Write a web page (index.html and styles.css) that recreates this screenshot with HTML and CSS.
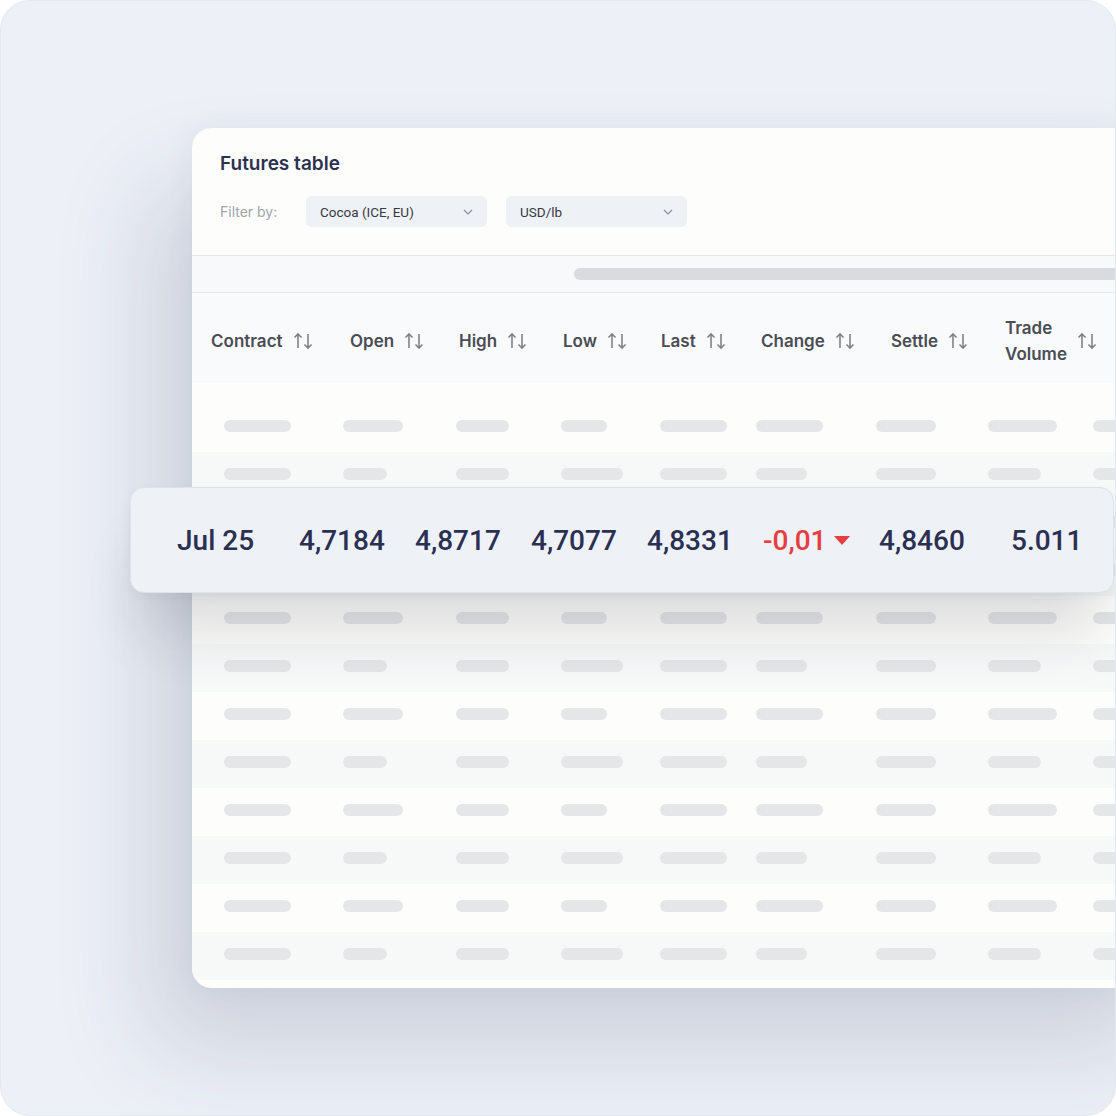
FILE: index.html
```html
<!DOCTYPE html>
<html>
	<head>
		<meta charset="UTF-8">
		<title>Futures table</title>
		<link rel="stylesheet" href="styles.css">
	</head>
	<body>
		<div class="frame">
			<div class="card">
				<div class="card-inner">
					<div class="card-head">
						<h1>Futures table</h1>
						<div class="filters">
							<span class="filter-label">Filter by:</span>
							<div class="select">Cocoa (ICE, EU) <svg class="chevron" viewBox="0 0 10 6"><path d="M1 1l4 4 4-4"/></svg></div>
							<div class="select">USD/lb <svg class="chevron" viewBox="0 0 10 6"><path d="M1 1l4 4 4-4"/></svg></div>
						</div>
					</div>
					<div class="scroll-strip"><div class="scroll-thumb"></div></div>
					<div class="thead">
						<div class="th">Contract <svg class="sort" viewBox="0 0 20 20"><path d="M5 17V3M1.5 6.5L5 3l3.5 3.5M15 3v14M11.5 13.5L15 17l3.5-3.5"/></svg></div>
						<div class="th">Open <svg class="sort" viewBox="0 0 20 20"><path d="M5 17V3M1.5 6.5L5 3l3.5 3.5M15 3v14M11.5 13.5L15 17l3.5-3.5"/></svg></div>
						<div class="th">High <svg class="sort" viewBox="0 0 20 20"><path d="M5 17V3M1.5 6.5L5 3l3.5 3.5M15 3v14M11.5 13.5L15 17l3.5-3.5"/></svg></div>
						<div class="th">Low <svg class="sort" viewBox="0 0 20 20"><path d="M5 17V3M1.5 6.5L5 3l3.5 3.5M15 3v14M11.5 13.5L15 17l3.5-3.5"/></svg></div>
						<div class="th">Last <svg class="sort" viewBox="0 0 20 20"><path d="M5 17V3M1.5 6.5L5 3l3.5 3.5M15 3v14M11.5 13.5L15 17l3.5-3.5"/></svg></div>
						<div class="th">Change <svg class="sort" viewBox="0 0 20 20"><path d="M5 17V3M1.5 6.5L5 3l3.5 3.5M15 3v14M11.5 13.5L15 17l3.5-3.5"/></svg></div>
						<div class="th">Settle <svg class="sort" viewBox="0 0 20 20"><path d="M5 17V3M1.5 6.5L5 3l3.5 3.5M15 3v14M11.5 13.5L15 17l3.5-3.5"/></svg></div>
						<div class="th">Trade<br>Volume <svg class="sort" viewBox="0 0 20 20"><path d="M5 17V3M1.5 6.5L5 3l3.5 3.5M15 3v14M11.5 13.5L15 17l3.5-3.5"/></svg></div>
					</div>
					<div class="tbody">
						<div class="row"><i></i><i></i><i></i><i></i><i></i><i></i><i></i><i></i><i></i></div>
						<div class="row"><i></i><i></i><i></i><i></i><i></i><i></i><i></i><i></i><i></i></div>
						<div class="row"><i></i><i></i><i></i><i></i><i></i><i></i><i></i><i></i><i></i></div>
						<div class="row"><i></i><i></i><i></i><i></i><i></i><i></i><i></i><i></i><i></i></div>
						<div class="row"><i></i><i></i><i></i><i></i><i></i><i></i><i></i><i></i><i></i></div>
						<div class="row"><i></i><i></i><i></i><i></i><i></i><i></i><i></i><i></i><i></i></div>
						<div class="row"><i></i><i></i><i></i><i></i><i></i><i></i><i></i><i></i><i></i></div>
						<div class="row"><i></i><i></i><i></i><i></i><i></i><i></i><i></i><i></i><i></i></div>
						<div class="row"><i></i><i></i><i></i><i></i><i></i><i></i><i></i><i></i><i></i></div>
						<div class="row"><i></i><i></i><i></i><i></i><i></i><i></i><i></i><i></i><i></i></div>
						<div class="row"><i></i><i></i><i></i><i></i><i></i><i></i><i></i><i></i><i></i></div>
						<div class="row"><i></i><i></i><i></i><i></i><i></i><i></i><i></i><i></i><i></i></div>
					</div>
				</div>
				<!-- selected contract, lifted over the table -->
				<div class="row-focus">
					<span>Jul 25</span>
					<span>4,7184</span>
					<span>4,8717</span>
					<span>4,7077</span>
					<span>4,8331</span>
					<span class="neg">-0,01 <svg class="tri" viewBox="0 0 16 9"><path d="M0 0h16L8 9z"/></svg></span>
					<span>4,8460</span>
					<span>5.011</span>
				</div>
			</div>
		</div>
	</body>
</html>
```

FILE: styles.css
```css
*{
	margin: 0;
	padding: 0;
	box-sizing: border-box;
}
body{
	background: #fff;
	font-family: Roboto, "Liberation Sans", sans-serif;
}
.frame{
	width: 1116px;
	height: 1116px;
	background: #edf0f7;
	border: 1px solid #e3e7ee;
	border-radius: 30px;
	overflow: hidden;
	padding: 127px 0 0 191px;
}
.card{
	position: relative;
	width: 1000px;
	height: 860px;
	background: #fdfdfb;
	border-radius: 20px;
	box-shadow: -40px 60px 100px rgba(40, 50, 80, 0.16), 0 0 30px rgba(40, 50, 80, 0.05);
}
.card-inner{
	height: 100%;
	border-radius: 20px;
	overflow: hidden;
}
.card-head{
	height: 128px;
	padding: 24px 28px 0;
	border-bottom: 1px solid #e7e8ea;
}
.card-head h1{
	font: 600 19px/24px Inter, sans-serif;
	color: #2c3150;
}
.filters{
	display: flex;
	align-items: center;
	margin-top: 20px;
}
.filter-label{
	width: 86px;
	font: 14px Inter, sans-serif;
	color: #a1a4ab;
}
.select{
	width: 181px;
	height: 31px;
	margin-right: 19px;
	padding: 0 14px;
	background: #eef1f6;
	border-radius: 6px;
	display: flex;
	align-items: center;
	justify-content: space-between;
	font-size: 13.5px;
	color: #373a42;
}
.chevron{
	width: 10px;
	height: 6px;
	fill: none;
	stroke: #8c919a;
	stroke-width: 1.2;
}
.scroll-strip{
	height: 37px;
	padding: 12px 0 0 382px;
	background: #f8f9fa;
	border-bottom: 1px solid #e7e8ea;
}
.scroll-thumb{
	height: 12px;
	background: #d9dbde;
	border-radius: 6px;
}
.thead{
	height: 90px;
	padding: 5px 0 0 19px;
	background: #f9fafb;
	display: grid;
	grid-template-columns: 139px 109px 104px 98px 100px 130px 114px auto;
	align-items: center;
}
.th{
	display: flex;
	align-items: center;
	gap: 10px;
	font: 600 17px/26px Inter, sans-serif;
	color: #4a4d54;
}
.sort{
	width: 20px;
	height: 20px;
	fill: none;
	stroke: #7f8389;
	stroke-width: 1.6;
}
.tbody{
	padding: 21px 0 8px;
}
.row{
	height: 48px;
	padding: 16px 0 0 32px;
	display: grid;
	grid-template-columns: 119px 113px 105px 99px 96px 120px 112px 105px auto;
}
.row:nth-child(even){
	background: #f7f8f8;
}
.row i{
	display: block;
	height: 12px;
	border-radius: 6px;
	background: #e5e6e8;
}
.row i:nth-child(1){ width: 67px; }
.row i:nth-child(2){ width: 60px; }
.row i:nth-child(3){ width: 53px; }
.row i:nth-child(4){ width: 46px; }
.row i:nth-child(5){ width: 67px; }
.row i:nth-child(6){ width: 67px; }
.row i:nth-child(7){ width: 60px; }
.row i:nth-child(8){ width: 69px; }
.row i:nth-child(9){ width: 60px; }
.row:nth-child(even) i:nth-child(2){ width: 44px; }
.row:nth-child(even) i:nth-child(4){ width: 62px; }
.row:nth-child(even) i:nth-child(6){ width: 51px; }
.row:nth-child(even) i:nth-child(8){ width: 53px; }
.row-focus{
	position: absolute;
	left: -62px;
	top: 359px;
	width: 984px;
	height: 106px;
	padding-left: 46px;
	background: #eef2f6;
	border: 1px solid #dde3eb;
	border-radius: 14px;
	box-shadow: 0 50px 60px -14px rgba(30, 35, 50, 0.16), 0 4px 12px rgba(30, 40, 60, 0.05);
	display: grid;
	grid-template-columns: 122px 116px 116px 116px 116px 116px 132px auto;
	align-items: center;
	font: 500 28px Roboto, sans-serif;
	color: #2b3052;
}
.neg{
	display: flex;
	align-items: center;
	gap: 7px;
	color: #e63d3f;
}
.tri{
	width: 16px;
	height: 9px;
	fill: #e63d3f;
}
```
